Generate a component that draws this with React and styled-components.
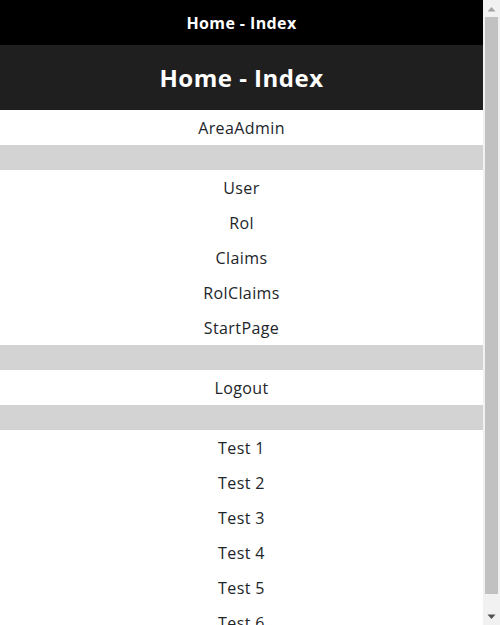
import React from "react";
import styled, { createGlobalStyle } from "styled-components";

const Global = createGlobalStyle`
  html, body { margin: 0; padding: 0; background: #fff; }
  body { font-family: "Open Sans", "Noto Sans", Arial, sans-serif; color: #212529; }
`;

const Page = styled.div`
  margin-right: 17px;
`;

const TopBar = styled.header`
  height: 45px;
  background: #000;
  color: #fff;
  display: flex;
  align-items: center;
  justify-content: center;
  font-weight: 700;
  font-size: 16px;
  letter-spacing: 0.4px;
`;

const Banner = styled.div`
  height: 65px;
  background: #1f1f1f;
  color: #fff;
  display: flex;
  align-items: center;
  justify-content: center;
  font-weight: 700;
  font-size: 24px;
  letter-spacing: 0.5px;
`;

const Menu = styled.nav`
  display: flex;
  flex-direction: column;
`;

const Item = styled.a`
  height: 35px;
  display: flex;
  align-items: center;
  justify-content: center;
  font-size: 16px;
  letter-spacing: 0.4px;
  color: #212529;
  text-decoration: none;
`;

const Divider = styled.div`
  height: 25px;
  background: #d3d3d3;
`;

/* Browser scrollbar drawn over the page's right edge */
const Rail = styled.div`
  position: fixed;
  top: 0;
  right: 0;
  width: 17px;
  height: 100vh;
  background: #f1f1f1;
  display: flex;
  flex-direction: column;
`;

const RailButton = styled.div`
  height: 17px;
  flex: none;
  display: flex;
  align-items: center;
  justify-content: center;
`;

const Track = styled.div`
  flex: 1;
  padding: 0 2px;
  display: flex;
  flex-direction: column;
`;

const Thumb = styled.div`
  background: #c1c1c1;
`;

const Arrow = ({ dir, color }) => (
  <svg width="9" height="6" viewBox="0 0 9 6">
    <path d={dir === "up" ? "M0.5 5.5 L4.5 1 L8.5 5.5 Z" : "M0.5 0.5 L4.5 5 L8.5 0.5 Z"} fill={color} />
  </svg>
);

const groups = [
  ["AreaAdmin"],
  ["User", "Rol", "Claims", "RolClaims", "StartPage"],
  ["Logout"],
  ["Test 1", "Test 2", "Test 3", "Test 4", "Test 5", "Test 6"],
];

export default function App() {
  return (
    <>
      <Global />
      <Page>
        <TopBar>Home - Index</TopBar>
        <Banner>Home - Index</Banner>
        <Menu>
          {groups.map((g, i) => (
            <React.Fragment key={i}>
              {i > 0 && <Divider />}
              {g.map((t) => (
                <Item key={t}>{t}</Item>
              ))}
            </React.Fragment>
          ))}
        </Menu>
      </Page>
      <Rail>
        <RailButton>
          <Arrow dir="up" color="#a3a3a3" />
        </RailButton>
        <Track>
          <Thumb style={{ height: "97.6%" }} />
        </Track>
        <RailButton>
          <Arrow dir="down" color="#505050" />
        </RailButton>
      </Rail>
    </>
  );
}
